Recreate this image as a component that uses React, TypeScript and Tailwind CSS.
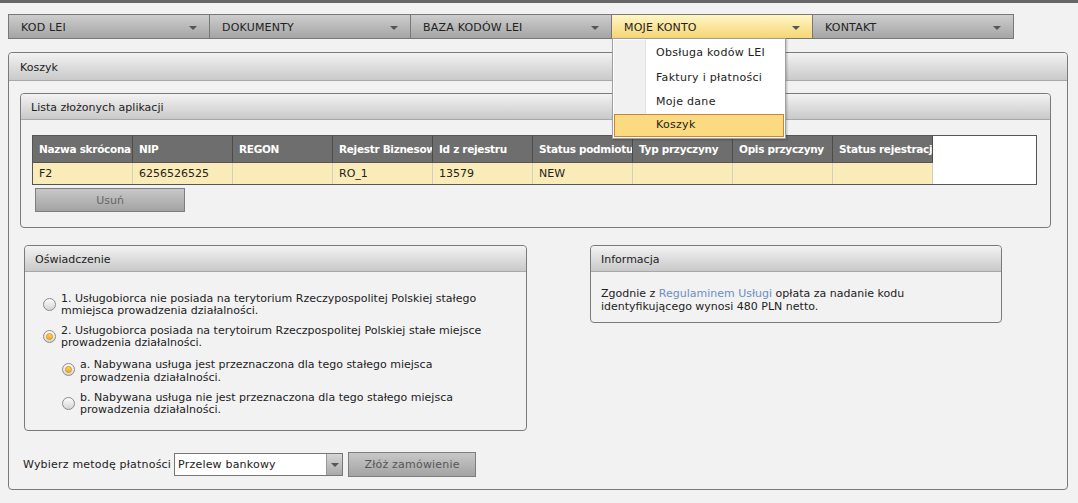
const NAV = [
  { label: "KOD LEI", active: false },
  { label: "DOKUMENTY", active: false },
  { label: "BAZA KODÓW LEI", active: false },
  { label: "MOJE KONTO", active: true },
  { label: "KONTAKT", active: false },
];

const MENU = ["Obsługa kodów LEI", "Faktury i płatności", "Moje dane"];

const COLUMNS = [
  "Nazwa skrócona",
  "NIP",
  "REGON",
  "Rejestr Biznesowy",
  "Id z rejestru",
  "Status podmiotu",
  "Typ przyczyny",
  "Opis przyczyny",
  "Status rejestracji",
];

const ROW = ["F2", "6256526525", "", "RO_1", "13579", "NEW", "", "", ""];

function Caret() {
  return (
    <span className="inline-block h-0 w-0 border-x-[4px] border-t-[4px] border-x-transparent border-t-[#555]" />
  );
}

function Radio({ checked }: { checked: boolean }) {
  return (
    <span className="mt-[5px] flex h-[13px] w-[13px] shrink-0 items-center justify-center rounded-full border border-[#8a8a8a] bg-gradient-to-b from-[#fdfdfd] to-[#d4d4d4]">
      {checked && (
        <span className="h-[7px] w-[7px] rounded-full border border-[#d99a12] bg-gradient-to-b from-[#ffd659] to-[#f2a91a]" />
      )}
    </span>
  );
}

function Panel({
  title,
  className,
  children,
}: {
  title: string;
  className: string;
  children: React.ReactNode;
}) {
  return (
    <div className={`rounded-[4px] border border-[#7a7a7a] bg-[#f2f2f2] ${className}`}>
      <div className="flex h-[26px] items-center rounded-t-[4px] border-b border-[#a8a8a8] bg-gradient-to-b from-[#f3f3f3] to-[#c9c9c9] px-[10px] pt-[3px]">
        {title}
      </div>
      {children}
    </div>
  );
}

export default function App() {
  return (
    <div
      className="relative h-[503px] w-[1078px] overflow-hidden border-t-[3px] border-[#666] bg-[#f2f2f2] text-[11px] text-[#222]"
      style={{ fontFamily: "'DejaVu Sans', Verdana, sans-serif" }}
    >
      {/* top menu */}
      <div className="ml-[8px] mt-[11px] flex h-[25px] w-[1006px] border border-[#787878]">
        {NAV.map((item, i) => (
          <div
            key={item.label}
            className={`flex flex-1 items-center justify-between pl-[12px] pr-[12px] pt-[3px] ${
              i < NAV.length - 1 ? "border-r border-[#787878]" : ""
            } ${
              item.active
                ? "bg-gradient-to-b from-[#fff6c4] to-[#f6d574]"
                : "bg-gradient-to-b from-[#cdcdcd] to-[#a5a5a5]"
            }`}
          >
            <span className="tracking-[0.2px]">{item.label}</span>
            <Caret />
          </div>
        ))}
      </div>

      {/* dropdown */}
      <div className="absolute left-[612px] top-[35px] z-10 w-[174px] border border-[#a0a0a0] bg-white p-[1px] shadow-[1px_1px_2px_rgba(0,0,0,0.25)]">
        <div className="flex">
          <div className="w-[32px] border-r border-[#e2e2e2] bg-[#f1f1f1]" />
          <div className="flex flex-col">
            {MENU.map((m) => (
              <div key={m} className="flex h-[24.5px] items-center pl-[10px] pt-[2px] tracking-[0.3px]">
                {m}
              </div>
            ))}
          </div>
        </div>
        <div className="flex h-[23px] items-center border border-[#c7843a] bg-[#fcda7f] pl-[41px] pt-[1px] tracking-[0.3px]">
          Koszyk
        </div>
      </div>

      {/* main panel */}
      <div className="ml-[8px] mt-[13px] h-[438px] w-[1060px] rounded-[4px] border border-[#7a7a7a]">
        <div className="flex h-[28px] items-center rounded-t-[4px] border-b border-[#a8a8a8] bg-gradient-to-b from-[#f3f3f3] to-[#c9c9c9] px-[11px] pt-[3px]">
          Koszyk
        </div>

        <Panel title="Lista złożonych aplikacji" className="ml-[11px] mt-[12px] h-[135px] w-[1031px]">
          <div className="ml-[11px] mt-[15px] flex w-[1005px] border border-[#555] bg-white">
            <div className="flex flex-col">
              <div className="flex h-[26px] bg-[#6e6e6e] text-[10.5px] font-bold tracking-[-0.3px] text-white">
                {COLUMNS.map((c) => (
                  <div
                    key={c}
                    className="flex w-[100px] items-center overflow-hidden whitespace-nowrap border-r border-[#4c4c4c] pl-[6px] pt-[1px]"
                  >
                    {c}
                  </div>
                ))}
              </div>
              <div className="flex h-[22px] border-t border-[#555] bg-[#faecb8]">
                {ROW.map((v, i) => (
                  <div
                    key={i}
                    className="flex w-[100px] items-center overflow-hidden whitespace-nowrap border-r border-[#d3cfc0] pl-[6px] pt-[2px]"
                  >
                    {v}
                  </div>
                ))}
              </div>
            </div>
          </div>
          <button className="ml-[14px] mt-[3px] h-[24px] w-[150px] border border-[#7e7e7e] bg-gradient-to-b from-[#c8c8c8] to-[#a3a3a3] pt-[2px] text-[#666]">
            Usuń
          </button>
        </Panel>

        <div className="mt-[17px] flex items-start">
          <Panel title="Oświadczenie" className="ml-[15px] h-[186px] w-[503px]">
            <div className="flex flex-col gap-[8px] pl-[18px] pt-[21px] leading-[12px]">
              <div className="flex gap-[5px]">
                <Radio checked={false} />
                <span>
                  1. Usługobiorca nie posiada na terytorium Rzeczypospolitej Polskiej stałego
                  <br />
                  mmiejsca prowadzenia działalności.
                </span>
              </div>
              <div className="flex gap-[5px]">
                <Radio checked />
                <span>
                  2. Usługobiorca posiada na terytoirum Rzeczpospolitej Polskiej stałe miejsce
                  <br />
                  prowadzenia działalności.
                </span>
              </div>
              <div className="ml-[19px] flex gap-[5px] pt-[1px]">
                <Radio checked />
                <span className="leading-[13px]">
                  a. Nabywana usługa jest przeznaczona dla tego stałego miejsca
                  <br />
                  prowadzenia działalności.
                </span>
              </div>
              <div className="ml-[19px] flex gap-[5px]">
                <Radio checked={false} />
                <span>
                  b. Nabywana usługa nie jest przeznaczona dla tego stałego miejsca
                  <br />
                  prowadzenia działalności.
                </span>
              </div>
            </div>
          </Panel>

          <Panel title="Informacja" className="ml-[63px] h-[78px] w-[412px]">
            <p className="pl-[10px] pt-[15px] leading-[13px]">
              Zgodnie z <span className="text-[#6b8fc4]">Regulaminem Usługi</span> opłata za nadanie kodu
              <br />
              identyfikującego wynosi 480 PLN netto.
            </p>
          </Panel>
        </div>

        <div className="ml-[14px] mt-[21px] flex items-center">
          <span className="mr-[3px] pt-[2px] tracking-[0.2px]">Wybierz metodę płatności</span>
          <div className="flex h-[23px] w-[169px] border border-[#777] bg-white">
            <span className="flex flex-1 items-center pl-[3px] pt-[2px] tracking-[0.2px]">Przelew bankowy</span>
            <span className="flex w-[16px] items-center justify-center border-l border-[#999] bg-gradient-to-b from-[#d6d6d6] to-[#a9a9a9]">
              <Caret />
            </span>
          </div>
          <button className="ml-[5px] h-[25px] w-[128px] border border-[#7e7e7e] bg-gradient-to-b from-[#c8c8c8] to-[#a3a3a3] pt-[2px] text-[#555] tracking-[0.2px]">
            Złóż zamówienie
          </button>
        </div>
      </div>
    </div>
  );
}
